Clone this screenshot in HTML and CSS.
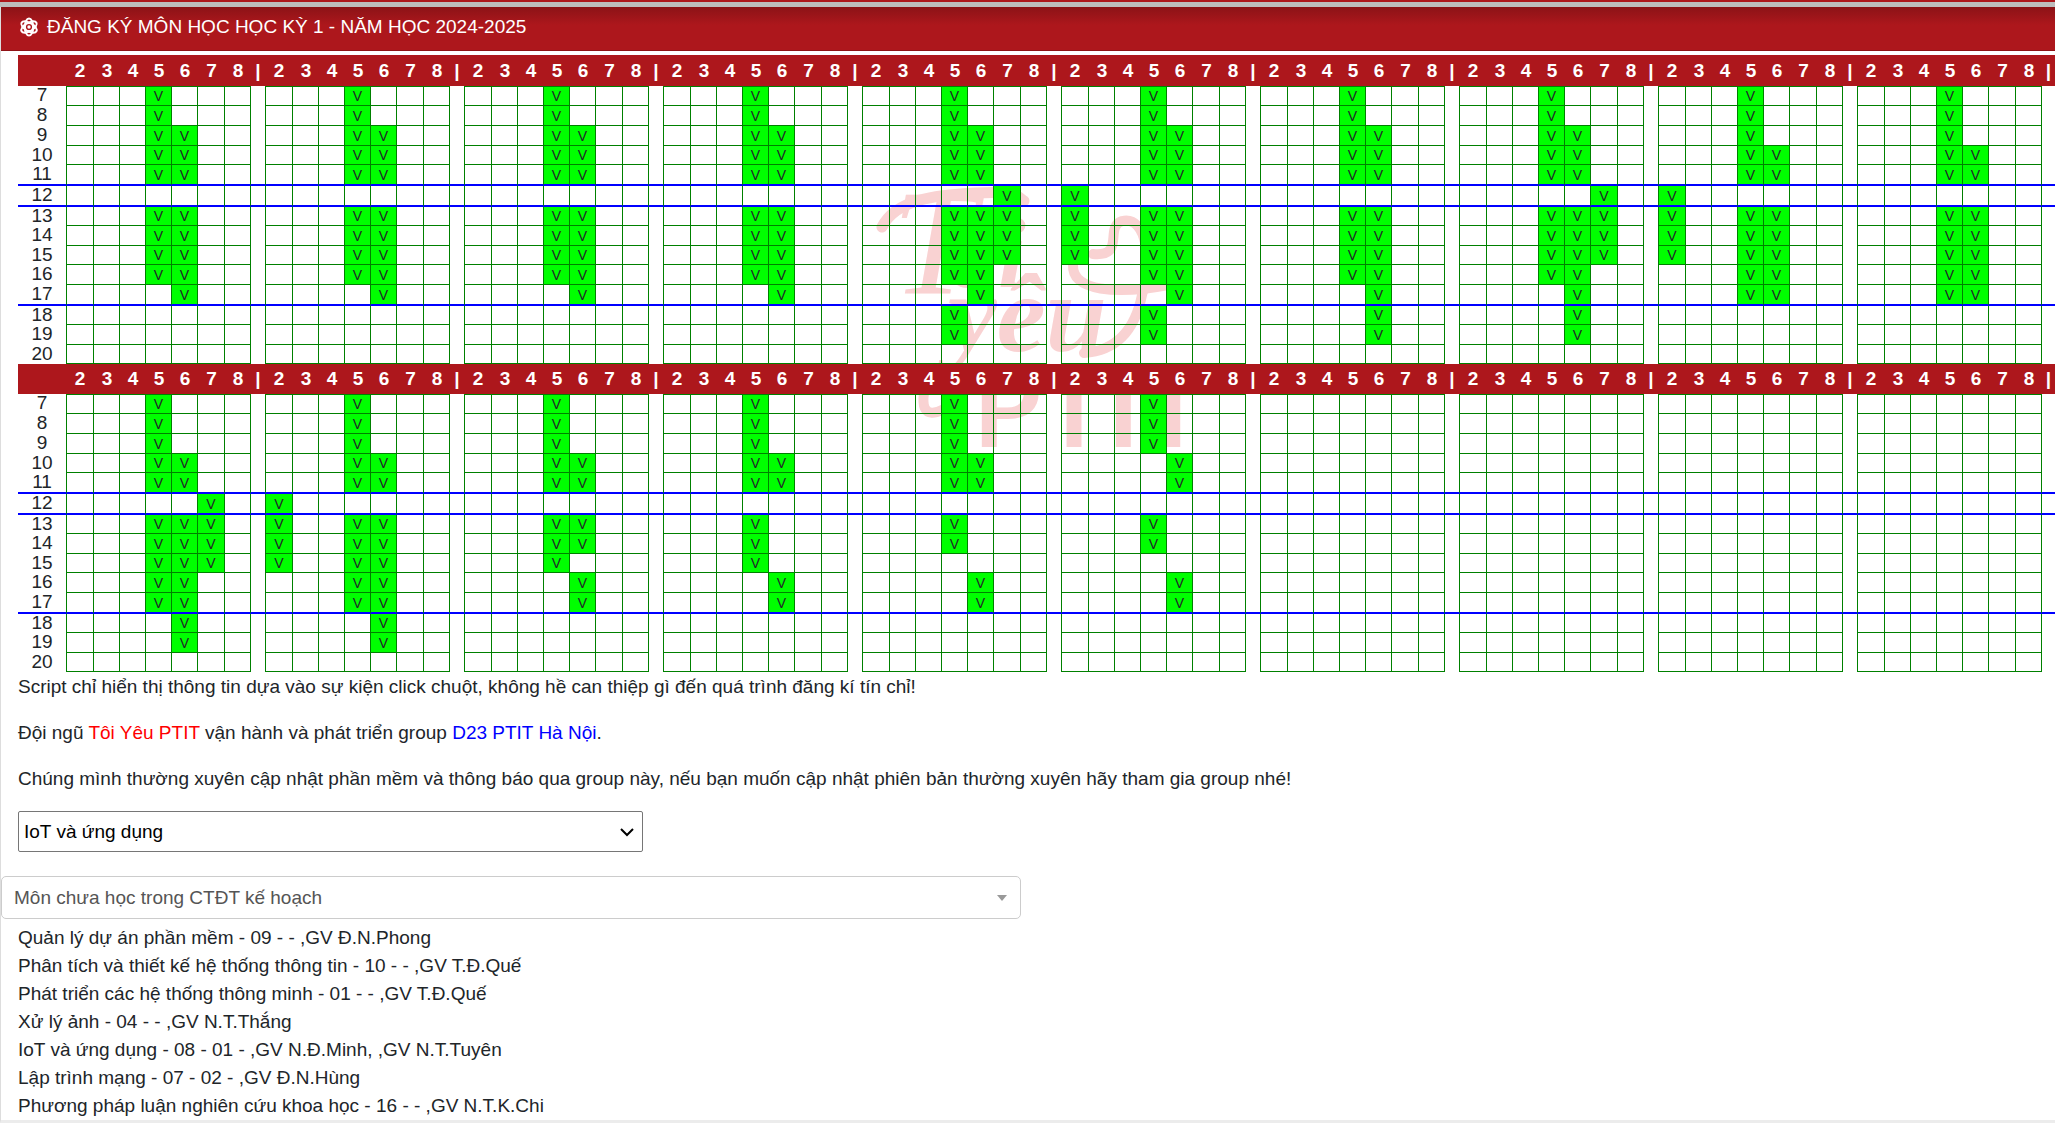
FILE: index.html
```html
<!DOCTYPE html>
<html lang="vi">
<head>
<meta charset="utf-8">
<title>Đăng ký môn học</title>
<link rel="stylesheet" href="styles.css">
</head>
<body>
<div class="strip"></div>
<main class="panel">
  <header class="title-bar">
    <svg class="title-icon" viewBox="0 0 20 20" aria-hidden="true">
      <g fill="none" stroke="#fff" stroke-width="2">
        <ellipse cx="10" cy="10" rx="4.2" ry="8.6"/>
        <ellipse cx="10" cy="10" rx="4.2" ry="8.6" transform="rotate(60 10 10)"/>
        <ellipse cx="10" cy="10" rx="4.2" ry="8.6" transform="rotate(120 10 10)"/>
      </g>
      <circle cx="10" cy="10" r="4.8" fill="#fff"/>
      <circle cx="10" cy="10" r="2.4" fill="none" stroke="#ad171c" stroke-width="1.4"/>
    </svg>
    <h1>ĐĂNG KÝ MÔN HỌC HỌC KỲ 1 - NĂM HỌC 2024-2025</h1>
  </header>

  <section class="schedule">
    <svg class="watermark" viewBox="0 0 310 270" aria-hidden="true">
      <g fill="none" stroke="#f9d2d2" stroke-linecap="round" stroke-linejoin="round">
        <path stroke-width="11" d="M6 42 C20 14 60 10 100 8 S140 10 148 16"/>
        <path stroke-width="10" d="M217 69 C250 72 228 42 246 36 C272 30 276 80 266 110 C258 150 236 166 208 168"/>
        <path stroke-width="10" d="M197 80 C196 106 240 110 292 100"/>
        <path stroke-width="10" d="M48 208 C44 236 62 230 80 216"/>
      </g>
      <g fill="#f9d2d2">
        <text class="mark-initial" x="16" y="108">T</text>
        <text class="mark-small" x="72" y="102">ôi</text>
        <text class="mark-script" x="72" y="166">yêu</text>
        <text class="mark-bold" x="97" y="262">PTIT</text>
      </g>
    </svg>
    <div id="tables"></div>
  </section>

  <section class="notes">
    <p>Script chỉ hiển thị thông tin dựa vào sự kiện click chuột, không hề can thiệp gì đến quá trình đăng kí tín chỉ!</p>
    <p>Đội ngũ <a class="team" href="#team">Tôi Yêu PTIT</a> vận hành và phát triển group <a class="group" href="#group">D23 PTIT Hà Nội</a>.</p>
    <p>Chúng mình thường xuyên cập nhật phần mềm và thông báo qua group này, nếu bạn muốn cập nhật phiên bản thường xuyên hãy tham gia group nhé!</p>
    <div class="field">
      <select class="subject" aria-label="Môn học"><option>IoT và ứng dụng</option></select>
      <svg class="chevron" viewBox="0 0 14 10" aria-hidden="true"><path d="M1 2 L7 8 L13 2" fill="none" stroke="#000" stroke-width="2"/></svg>
    </div>
  </section>

  <div class="filter">
    <select class="plan" aria-label="Lọc môn học"><option>Môn chưa học trong CTĐT kế hoạch</option></select>
    <svg class="caret" viewBox="0 0 10 6" aria-hidden="true"><path d="M0 0 H10 L5 6 Z" fill="#999"/></svg>
  </div>

  <ul class="courses">
    <li>Quản lý dự án phần mềm - 09 - - ,GV Đ.N.Phong</li>
    <li>Phân tích và thiết kế hệ thống thông tin - 10 - - ,GV T.Đ.Quế</li>
    <li>Phát triển các hệ thống thông minh - 01 - - ,GV T.Đ.Quế</li>
    <li>Xử lý ảnh - 04 - - ,GV N.T.Thắng</li>
    <li>IoT và ứng dụng - 08 - 01 - ,GV N.Đ.Minh, ,GV N.T.Tuyên</li>
    <li>Lập trình mạng - 07 - 02 - ,GV Đ.N.Hùng</li>
    <li>Phương pháp luận nghiên cứu khoa học - 16 - - ,GV N.T.K.Chi</li>
  </ul>
</main>
<script src="schedule.js"></script>
</body>
</html>
```

FILE: styles.css
```css
* { box-sizing: border-box; }
body {
  margin: 0;
  font: 19px/28px "Liberation Sans", Arial, sans-serif;
  color: #212529;
  background: #fff;
}
.strip {
  height: 7px;
  background: #bdbdbd;
  border-top: 2px solid #ad171c;
}
.panel {
  border-left: 1px solid #ddd;
  border-bottom: 3px solid #ececec;
  overflow: hidden;
}
.title-bar {
  display: flex;
  align-items: center;
  gap: 8px;
  height: 44px;
  padding: 0 18px 4px;
  color: #fff;
  background: linear-gradient(#8c1317, #ad171c 18px);
  border-bottom: 1px solid #8f1216;
}
.title-icon { width: 20px; height: 20px; }
.title-bar h1 { margin: 0; font-size: 19px; font-weight: 400; }

.schedule {
  position: relative;
  margin: 4px 0 0 17px;
}
.watermark {
  position: absolute;
  z-index: -1;
  left: 858px;
  top: 130px;
  width: 310px;
  height: 270px;
  overflow: visible;
}
.mark-initial { font: italic 150px "Liberation Serif", serif; }
.mark-small { font: italic bold 100px "Liberation Serif", serif; }
.mark-script { font: italic bold 110px "Liberation Serif", serif; }
.mark-bold { font: bold 110px "Lato", sans-serif; }

.grid {
  width: 100%;
  table-layout: fixed;
  border-collapse: separate;
  border-spacing: 0;
  line-height: 18px;
}
.grid th, .grid td { padding: 0; text-align: center; vertical-align: top; }
.c-label { width: 48px; }
.c-first { width: 28px; }
.c-day { width: 26px; }
.c-wide { width: 27px; }
.c-gap { width: 14px; }
.c-end { width: 13px; }
.grid thead th {
  height: 31px;
  background: #ad171c;
  color: #fff;
  font-weight: 700;
  line-height: 31px;
}
.grid + .grid thead th { height: 30px; line-height: 30px; }
.grid tbody tr { height: 20px; }
.grid tbody tr:nth-child(4), .grid tbody tr:nth-child(7),
.grid tbody tr:nth-child(9), .grid tbody tr:nth-child(12),
.grid tbody tr:nth-child(14) { height: 19px; }
.grid tbody tr.cut { height: 21px; }
.grid tbody th { font-weight: 400; }
.grid .day {
  border: 0 solid #008000;
  border-width: 0 1px 1px 0;
  font-size: 14px;
}
.grid .first { border-left-width: 1px; }
.grid tbody tr:first-child .day { border-top-width: 1px; }
.grid .on { background: #0f0; vertical-align: middle; }
.grid .cut > * { border-bottom: 2px solid #00f; }

.notes { padding: 1px 17px 0; }
.notes p { margin: 0 0 18px; }
.team { color: #f00; text-decoration: none; }
.group { color: #00f; text-decoration: none; }
.field, .filter { display: grid; align-items: center; }
.field { width: 625px; }
.filter { width: 1020px; margin: 24px 0 5px; }
.field > *, .filter > * { grid-area: 1 / 1; }
select {
  appearance: none;
  width: 100%;
  margin: 0;
  background: #fff;
  font: inherit;
}
.subject { height: 41px; padding: 0 5px; border: 1px solid #767676; border-radius: 2px; color: #000; }
.plan { height: 43px; padding: 0 12px; border: 1px solid #ccc; border-radius: 5px; color: #555; }
.chevron { justify-self: end; width: 14px; height: 10px; margin-right: 9px; pointer-events: none; }
.caret { justify-self: end; width: 10px; height: 6px; margin-right: 14px; pointer-events: none; }
.courses { margin: 0; padding: 0 17px; list-style: none; }
```

FILE: schedule.js
```js
// Each week lists, per weekday, the hours (7-20) that are taken.
const r = (a, b) => Array.from({ length: b - a + 1 }, (_, i) => a + i);
const A = { 5: [...r(7, 11), ...r(13, 16)], 6: [...r(9, 11), ...r(13, 17)] };
const D = { 5: [...r(7, 11), ...r(13, 17)], 6: [10, 11, ...r(13, 17)] };

const semester = [
  [
    A, A, A, A,
    { 5: [...A[5], 18, 19], 6: A[6], 7: r(12, 15) },
    { 2: r(12, 15), 5: [...A[5], 18, 19], 6: A[6] },
    { 5: A[5], 6: [...A[6], 18, 19] },
    { 5: A[5], 6: [...A[6], 18, 19], 7: r(12, 15) },
    { ...D, 2: r(12, 15) },
    D,
  ],
  [
    { 5: D[5], 6: [...D[6], 18, 19], 7: r(12, 15) },
    { 2: r(12, 15), 5: D[5], 6: [...D[6], 18, 19] },
    { 5: [...r(7, 11), ...r(13, 15)], 6: [10, 11, 13, 14, 16, 17] },
    { 5: [...r(7, 11), ...r(13, 15)], 6: [10, 11, 16, 17] },
    { 5: [...r(7, 11), 13, 14], 6: [10, 11, 16, 17] },
    { 5: [7, 8, 9, 13, 14], 6: [10, 11, 16, 17] },
    {}, {}, {}, {},
  ],
];

const days = r(2, 8);

function buildTable(weeks) {
  let cols = '<col class="c-label">';
  let head = '<th></th>';
  weeks.forEach((_, w) => {
    days.forEach(d => {
      cols += `<col class="${d === 2 ? 'c-first' : d === 7 ? 'c-wide' : 'c-day'}">`;
      head += `<th>${d}</th>`;
    });
    cols += `<col class="${w === weeks.length - 1 ? 'c-end' : 'c-gap'}">`;
    head += '<th>|</th>';
  });
  const rows = r(7, 20).map(h => {
    const cells = weeks.map(week => days.map(d => {
      const on = (week[d] || []).includes(h);
      return `<td class="day${d === 2 ? ' first' : ''}${on ? ' on' : ''}">${on ? 'V' : ''}</td>`;
    }).join('') + '<td></td>').join('');
    return `<tr${[11, 12, 17].includes(h) ? ' class="cut"' : ''}><th>${h}</th>${cells}</tr>`;
  }).join('');
  return `<table class="grid"><colgroup>${cols}</colgroup><thead><tr>${head}</tr></thead><tbody>${rows}</tbody></table>`;
}

document.getElementById('tables').innerHTML = semester.map(buildTable).join('');
```
